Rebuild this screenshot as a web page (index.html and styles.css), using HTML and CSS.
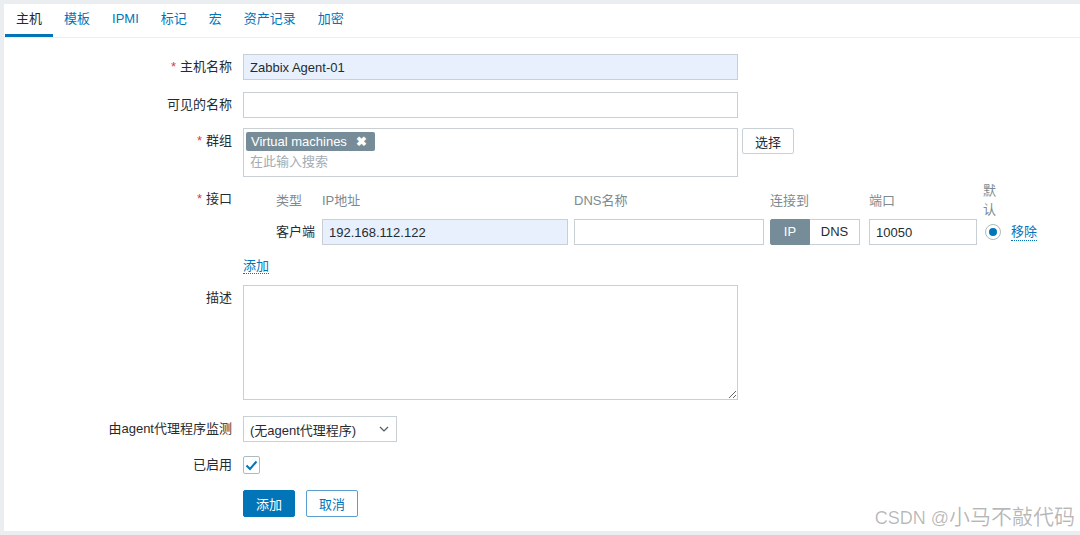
FILE: index.html
```html
<!DOCTYPE html>
<html lang="zh-CN">
<head>
	<meta charset="UTF-8">
	<title>主机</title>
	<link rel="stylesheet" href="styles.css">
</head>
<body>
	<div class="page">
		<!--标签页-->
		<ul class="tabs">
			<li class="tab active">主机</li>
			<li class="tab">模板</li>
			<li class="tab">IPMI</li>
			<li class="tab">标记</li>
			<li class="tab">宏</li>
			<li class="tab">资产记录</li>
			<li class="tab">加密</li>
		</ul>

		<form class="form">
			<div class="form-row">
				<label class="label required">主机名称</label>
				<input class="input filled" type="text" value="Zabbix Agent-01">
			</div>
			<div class="form-row gap-12">
				<label class="label">可见的名称</label>
				<input class="input" type="text">
			</div>
			<div class="form-row gap-10">
				<label class="label required">群组</label>
				<div class="field-inline">
					<div class="multiselect">
						<span class="chip">Virtual machines <b>✖</b></span>
						<div class="placeholder">在此输入搜索</div>
					</div>
					<button type="button" class="btn-grey">选择</button>
				</div>
			</div>

			<!--接口-->
			<div class="form-row gap-4">
				<label class="label required label-iface">接口</label>
				<div class="iface">
					<div class="iface-head">类型</div>
					<div class="iface-head">IP地址</div>
					<div class="iface-head">DNS名称</div>
					<div class="iface-head">连接到</div>
					<div class="iface-head">端口</div>
					<div class="iface-head">默认</div>
					<div class="iface-head"></div>

					<div class="iface-type">客户端</div>
					<input class="input filled" type="text" value="192.168.112.122">
					<input class="input" type="text">
					<div class="toggle">
						<span class="toggle-on">IP</span>
						<span class="toggle-off">DNS</span>
					</div>
					<input class="input" type="text" value="10050">
					<span class="radio"></span>
					<a class="link">移除</a>
				</div>
			</div>

			<div class="form-row gap-12">
				<span></span>
				<div class="link-row"><a class="link">添加</a></div>
			</div>

			<div class="form-row gap-10">
				<label class="label">描述</label>
				<textarea class="textarea"></textarea>
			</div>

			<div class="form-row gap-16">
				<label class="label">由agent代理程序监测</label>
				<div class="select">
					<span>(无agent代理程序)</span>
					<svg width="10" height="6" viewBox="0 0 10 6"><path d="M1 1 L5 5 L9 1" fill="none" stroke="#4f5a60" stroke-width="1.2"/></svg>
				</div>
			</div>

			<div class="form-row gap-10">
				<label class="label">已启用</label>
				<div class="check-wrap">
					<span class="checkbox">
						<svg width="13" height="11" viewBox="0 0 13 11"><path d="M1.5 5.5 L5 9 L11.5 1.5" fill="none" stroke="#0275b8" stroke-width="2"/></svg>
					</span>
				</div>
			</div>

			<div class="form-row gap-12">
				<span></span>
				<div class="buttons">
					<button type="button" class="btn-main">添加</button>
					<button type="button" class="btn-alt">取消</button>
				</div>
			</div>
		</form>
	</div>
	<div class="watermark"><span class="wm-latin">CSDN @</span>小马不敲代码</div>
</body>
</html>
```

FILE: styles.css
```css
body{
	margin:0;
	background:#ebeef0;
	font-family:"Liberation Sans","Noto Sans CJK SC",sans-serif;
	font-size:13px;
	color:#1f2c33;
	position:relative;
	height:535px;
	overflow:hidden;
}
.page{
	margin:4px 0 0 4px;
	height:527px;
	background:#fff;
}
/*标签页*/
.tabs{
	list-style:none;
	margin:0;
	padding:0 0 0 1px;
	display:flex;
	height:33px;
	border-bottom:1px solid #ebeef0;
}
.tab{
	padding:0 11px;
	line-height:30px;
	border-bottom:3px solid transparent;
	color:#0275b8;
}
.tab.active{
	color:#1f2c33;
	border-bottom-color:#0275b8;
}
/*表单*/
.form{
	padding-top:16px;
}
.form-row{
	display:grid;
	grid-template-columns:228px auto;
	column-gap:11px;
	justify-content:start;
}
.gap-4{margin-top:4px;}
.gap-10{margin-top:10px;}
.gap-12{margin-top:12px;}
.gap-16{margin-top:16px;}
.label{
	text-align:right;
	line-height:26px;
}
.required::before{
	content:"*";
	color:#e33734;
	margin-right:4px;
}
.label-iface{
	padding-top:5px;
}
.input{
	box-sizing:border-box;
	width:495px;
	height:26px;
	border:1px solid #c8d0d5;
	padding:0 6px;
	font:inherit;
	color:#1f2c33;
	background:#fff;
	margin:0;
	outline:none;
}
.input.filled{
	background:#e8f0fe;
}
.field-inline{
	display:flex;
	align-items:flex-start;
}
.multiselect{
	box-sizing:border-box;
	width:495px;
	height:49px;
	border:1px solid #c8d0d5;
	padding:3px 2px;
}
.chip{
	display:inline-block;
	background:#768d99;
	color:#fff;
	line-height:19px;
	padding:0 8px 0 5px;
	border-radius:2px;
}
.chip b{
	margin-left:6px;
	font-size:13px;
}
.placeholder{
	color:#a3adb3;
	line-height:20px;
	padding-left:4px;
	margin-top:1px;
}
.btn-grey{
	margin-left:4px;
	height:26px;
	width:52px;
	border:1px solid #c8d0d5;
	background:#fff;
	font:inherit;
	color:#1f2c33;
	border-radius:2px;
	padding:0;
}
/*接口*/
.iface{
	display:grid;
	grid-template-columns:40px 246px 190px 93px 108px 22px auto;
	column-gap:6px;
	padding-left:33px;
	align-items:center;
}
.iface-head{
	color:#7d8a91;
	line-height:19px;
}
.iface .input{
	width:100%;
}
.iface-type{
	line-height:26px;
}
.toggle{
	display:flex;
	width:90px;
	height:26px;
	box-sizing:border-box;
}
.toggle span{
	line-height:24px;
	text-align:center;
	border:1px solid #c8d0d5;
}
.toggle-on{
	width:38px;
	background:#768d99;
	border-color:#768d99 !important;
	color:#fff;
	border-radius:2px 0 0 2px;
}
.toggle-off{
	flex:1;
	border-left:none !important;
}
.radio{
	box-sizing:border-box;
	width:16px;
	height:16px;
	border:1px solid #acbbc2;
	border-radius:50%;
	margin-left:2px;
	display:flex;
	align-items:center;
	justify-content:center;
}
.radio::after{
	content:"";
	width:8px;
	height:8px;
	border-radius:50%;
	background:#0275b8;
}
.link{
	color:#0275b8;
	border-bottom:1px dotted #0275b8;
	line-height:17px;
	cursor:pointer;
}
.link-row{
	line-height:18px;
}
.iface .link{
	justify-self:start;
}
.textarea{
	box-sizing:border-box;
	width:495px;
	height:115px;
	border:1px solid #c8d0d5;
	margin:0;
	font:inherit;
	display:block;
}
.select{
	box-sizing:border-box;
	width:154px;
	height:26px;
	border:1px solid #c8d0d5;
	display:flex;
	align-items:center;
	justify-content:space-between;
	padding:0 7px 0 6px;
}
.check-wrap{
	height:26px;
	display:flex;
	align-items:center;
}
.checkbox{
	box-sizing:border-box;
	width:17px;
	height:18px;
	border:1px solid #acbbc2;
	border-radius:2px;
	display:flex;
	align-items:center;
	justify-content:center;
}
.buttons{
	display:flex;
	gap:11px;
}
.btn-main,.btn-alt{
	width:52px;
	height:27px;
	font:inherit;
	border-radius:2px;
	padding:0;
}
.btn-main{
	background:#0275b8;
	border:1px solid #0275b8;
	color:#fff;
}
.btn-alt{
	background:#fff;
	border:1px solid #5a9fcf;
	color:#0275b8;
}
.watermark{
	position:absolute;
	right:5px;
	bottom:6px;
	color:rgba(0,0,0,0.28);
	font-size:21px;
	line-height:22px;
}
.wm-latin{
	font-size:18px;
}
```
